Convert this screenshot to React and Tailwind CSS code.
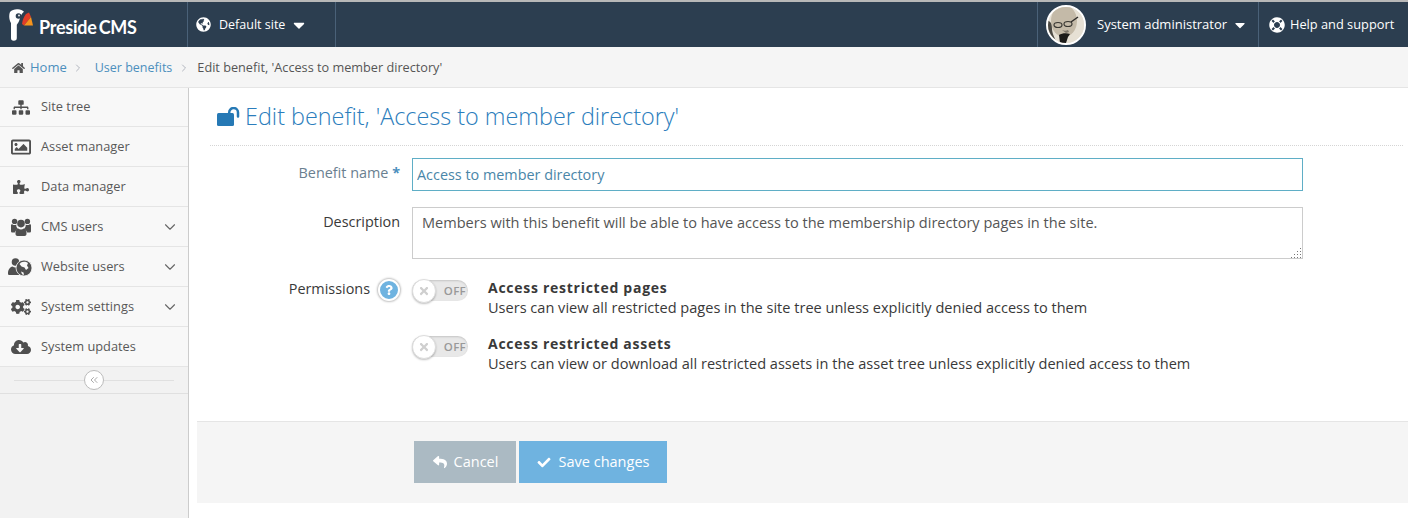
import React from "react";
import {
  FaSitemap,
  FaRegImage,
  FaPuzzlePiece,
  FaCogs,
  FaCloudDownloadAlt,
  FaGlobeAmericas,
  FaHome,
  FaLifeRing,
  FaReply,
  FaCheck,
  FaTimes,
  FaQuestion,
  FaCaretDown,
} from "react-icons/fa";
import { ChevronDown, ChevronRight, ChevronsLeft } from "lucide-react";

const UsersIcon = ({ className }) => (
  <svg viewBox="0 0 20 18" className={className} fill="currentColor">
    <circle cx="3.600" cy="3.400" r="2.700" />
    <circle cx="16.400" cy="3.400" r="2.700" />
    <circle cx="10" cy="5.600" r="3.800" />
    <path d="M0 7.500c0-1 .8-1.500 1.600-1 1.200.8 2.500.8 3.700.1-.2 2 .4 3.400 1.700 4.500-1.500.7-2.600 1.900-3.200 3.400H1.500C.6 14.500 0 14 0 13z" />
    <path d="M20 7.500c0-1-.8-1.500-1.600-1-1.200.8-2.500.8-3.700.1.200 2-.4 3.400-1.700 4.500 1.500.7 2.600 1.900 3.200 3.400h2.300c.9 0 1.500-.5 1.500-1.500z" />
    <path d="M4.500 14.500c0-2 1-3.500 2.700-4 1.700 1.200 3.900 1.200 5.600 0 1.700.5 2.700 2 2.700 4v1.500c0 1.200-.8 2-2 2h-7c-1.200 0-2-.8-2-2z" />
  </svg>
);

const WebsiteUsers = ({ className }) => (
  <svg viewBox="0 0 24 18" className={className} fill="currentColor">
    <circle cx="7.500" cy="4" r="3.800" />
    <path d="M0 15.500c0-4 2-6.500 4.500-7 1.800 1.300 4.200 1.300 6 0 1 .3 2 .8 2.500 1.500L11 17H1.500C.6 17 0 16.500 0 15.500z" />
    <circle cx="16" cy="10" r="8" stroke="#f8f8f8" strokeWidth="0.800" />
    <path d="M13 4.500c2-1 5-1 7 .5l-1 2.500 1.500 2.500-2.500 2-1.500-2.500-3-1-2-2.500z" fill="#f8f8f8" />
    <path d="M13 13.500l2.500 1 .5 2.500-2-.8z" fill="#f8f8f8" />
  </svg>
);

const UnlockIcon = ({ className }) => (
  <svg viewBox="0 0 23 19" className={className}>
    <rect x="0" y="6" width="17" height="13" rx="1.500" fill="currentColor" />
    <path d="M12.200 7V5.400a4.400 4.400 0 0 1 8.800 0V9.500" fill="none" stroke="currentColor" strokeWidth="2.500" strokeLinecap="round" />
  </svg>
);

const Logo = () => (
  <svg viewBox="0 0 24 32" className="h-[32px] w-[24px] shrink-0">
    <path
      d="M1 3C3 .8 6 0 9 .3c2.500.2 4.500 1 6 2.500-2 1.500-3.500 4-4.200 7-.6 2.500-1.800 4.500-3 6V29c0 1.800-1 2.800-3 2.800S2 30.800 2 29V14C.3 11.500 -.5 6.500 1 3z"
      fill="#ffffff"
    />
    <circle cx="9.500" cy="7" r="2.800" fill="#2c3e50" />
    <circle cx="10" cy="6.500" r="0.900" fill="#ffffff" />
    <path d="M17 5l3-1.500L22 8l-7 8.500-2-1.500c.5-4 2-7.500 4-10z" fill="#e23d28" />
    <path d="M22 8l2 8.500-9 0z" fill="#f7941d" />
  </svg>
);

const Avatar = () => (
  <div className="h-[40px] w-[40px] rounded-full border-2 border-white overflow-hidden bg-[#e6e0d4] shrink-0">
    <svg viewBox="0 0 36 36" className="h-full w-full">
      <rect width="36" height="36" fill="#e6e0d4" />
      <ellipse cx="16" cy="14" rx="13" ry="16" fill="#c4baa8" />
      <path d="M0 14c3 0 4 4 4 8s3 10 5 14H0z" fill="#4a4842" />
      <ellipse cx="10" cy="18" rx="4" ry="2.500" fill="none" stroke="#3a3833" strokeWidth="1.200" />
      <ellipse cx="20" cy="17" rx="4" ry="2.500" fill="none" stroke="#3a3833" strokeWidth="1.200" />
      <path d="M23 15l7-5" stroke="#2f2d2a" strokeWidth="1.500" />
      <path d="M14 23c2 1 4 1 6 0l1 2-3 1z" fill="#7d766a" />
      <path d="M11 28c3-2 8-2 11-1l-2 3-2 6h-6z" fill="#1c1b19" />
    </svg>
  </div>
);

const menu = [
  { icon: <FaSitemap className="h-[15px] w-[18px]" />, label: "Site tree" },
  { icon: <FaRegImage className="h-[20px] w-[20px]" />, label: "Asset manager" },
  { icon: <FaPuzzlePiece className="h-[16px] w-[16px]" />, label: "Data manager" },
  { icon: <UsersIcon className="h-[18px] w-[20px]" />, label: "CMS users", more: true },
  { icon: <WebsiteUsers className="h-[18px] w-[24px] -ml-[3px]" />, label: "Website users", more: true },
  { icon: <FaCogs className="h-[16px] w-[20px]" />, label: "System settings", more: true },
  { icon: <FaCloudDownloadAlt className="h-[16px] w-[20px]" />, label: "System updates" },
];

const Sidebar = () => (
  <div className="w-[189px] shrink-0 bg-[#f2f2f2] border-r border-[#cccccc]">
    {menu.map((item) => (
      <div
        key={item.label}
        className="h-[40px] first:h-[39px] flex items-center bg-[#f8f8f8] border-b border-[#e5e5e5] text-[12.800px] text-[#585858]"
      >
        <span className="w-[41px] shrink-0 flex justify-center pl-[1px] text-[#4f4f4f]">{item.icon}</span>
        <span className="flex-1">{item.label}</span>
        {item.more && <ChevronDown strokeWidth={1.5} className="h-[18px] w-[18px] mr-[9px] text-[#666666]" />}
      </div>
    ))}
    <div className="h-[27px] flex items-center px-[14px] border-b border-[#e0e0e0]">
      <div className="flex-1 h-px bg-[#e0e0e0]" />
      <div className="h-[20px] w-[20px] rounded-full border border-[#bbbbbb] bg-white flex items-center justify-center text-[#aaaaaa]">
        <ChevronsLeft className="h-[12px] w-[12px]" />
      </div>
      <div className="flex-1 h-px bg-[#e0e0e0]" />
    </div>
  </div>
);

const Toggle = () => (
  <div className="relative h-[21px] w-[56px] rounded-full bg-[#e8e8e8] shadow-[inset_0_1px_2px_rgba(0,0,0,0.15)] flex items-center justify-end pr-[2px] shrink-0">
    <span className="text-[11.500px] font-semibold tracking-[0.3px] text-[#999999]">OFF</span>
    <div className="absolute left-0 -top-[1px] h-[24px] w-[24px] rounded-full bg-white border border-[#dddddd] shadow-[0_1px_2px_rgba(0,0,0,0.25)] flex items-center justify-center">
      <FaTimes className="h-[12px] w-[12px] text-[#cfcfcf]" />
    </div>
  </div>
);

const Permission = ({ title, text }) => (
  <div className="flex">
    <div className="w-[76px] shrink-0 pt-[4px]">
      <Toggle />
    </div>
    <div className="pt-[2px]">
      <div className="text-[14px] leading-[19px] font-bold text-[#393939] tracking-[0.73px]">{title}</div>
      <div className="text-[14.550px] leading-[20px] text-[#393939]">{text}</div>
    </div>
  </div>
);

export default function App() {
  return (
    <div className="min-h-[518px] bg-white overflow-hidden font-['Open_Sans',sans-serif]">
      <div className="h-[2px] bg-[#b8b8b8]" />
      <div className="h-[45px] bg-[#2c3e50] flex items-stretch text-white text-[13px]">
        <div className="w-[188px] flex items-center pl-[9px] gap-[6px] border-r border-[#4a6178]">
          <Logo />
          <span className="font-['Lato',sans-serif] font-bold text-[18px] tracking-[-0.25px] mt-[5px]">
            Preside<span className="ml-[2px]">CMS</span>
          </span>
        </div>
        <div className="w-[148px] flex items-center pl-[8px] border-r border-[#4a6178]">
          <FaGlobeAmericas className="h-[15px] w-[15px]" />
          <span className="ml-[8px] mt-[1px] text-[12.500px]">Default site</span>
          <FaCaretDown className="h-[18px] w-[18px] ml-[5px]" />
        </div>
        <div className="flex-1" />
        <div className="w-[221px] flex items-center pl-[8px] border-l border-[#4a6178]">
          <Avatar />
          <span className="ml-[11px]">System administrator</span>
          <FaCaretDown className="h-[16px] w-[16px] ml-[5px]" />
        </div>
        <div className="w-[150px] flex items-center pl-[10px] border-l border-[#4a6178]">
          <FaLifeRing className="h-[16px] w-[16px]" />
          <span className="ml-[5px] text-[12.800px]">Help and support</span>
        </div>
      </div>
      <div className="h-[41px] pt-[1px] bg-[#f5f5f5] border-b border-[#e5e5e5] flex items-center pl-[12px] text-[13px] text-[#555555]">
        <FaHome className="h-[12px] w-[13px] text-[#555555]" />
        <span className="ml-[5px] text-[#4c8fbd]">Home</span>
        <ChevronRight className="h-[12px] w-[12px] ml-[5px] mr-[11px] text-[#b2b6bf]" />
        <span className="mt-[1px] text-[12.500px] text-[#4c8fbd]">User benefits</span>
        <ChevronRight className="h-[12px] w-[12px] mx-[6px] text-[#b2b6bf]" />
        <span className="ml-[1px] text-[12.700px]">Edit benefit, 'Access to member directory'</span>
      </div>
      <div className="flex min-h-[430px]">
        <Sidebar />
        <div className="flex-1 flex flex-col pl-[8px] pb-[15px]">
          <div className="ml-[13px] mr-[5px] h-[58px] border-b border-dotted border-[#d5d5d5] flex items-center pl-[7px] text-[#2679b5]">
            <UnlockIcon className="h-[19px] w-[23px] -mt-[1px] shrink-0" />
            <h1 className="ml-[5px] text-[23.400px] font-light text-[#2b7dbc]">
              Edit benefit, 'Access to member directory'
            </h1>
          </div>
          <div className="flex-1 pt-[12px]">
            <div className="flex items-start">
              <label className="w-[203px] text-right text-[14.400px] leading-[20px] pt-[5px] text-[#6a8090]">
                Benefit name <span className="font-bold text-[#4c8fbd]">*</span>
              </label>
              <input
                readOnly
                value="Access to member directory"
                className="ml-[12px] w-[891px] h-[33px] border border-[#5faec6] px-[4px] text-[14.400px] text-[#4a86a8] outline-none"
              />
            </div>
            <div className="flex items-start mt-[16px]">
              <label className="w-[203px] text-right text-[14.400px] leading-[20px] pt-[5px] text-[#393939]">
                Description
              </label>
              <div className="relative ml-[12px] w-[891px] h-[52px]">
                <textarea
                  readOnly
                  value="Members with this benefit will be able to have access to the membership directory pages in the site."
                  className="block w-full h-full resize-none border border-[#cccccc] px-[9px] py-[4px] text-[14.550px] leading-[20px] text-[#555555] outline-none"
                />
                <svg viewBox="0 0 10 10" className="absolute right-[2px] bottom-[1px] h-[10px] w-[10px]" fill="#777777">
                  <rect x="9" y="0" width="1" height="1" />
                  <rect x="6" y="3" width="1" height="1" />
                  <rect x="9" y="3" width="1" height="1" />
                  <rect x="3" y="6" width="1" height="1" />
                  <rect x="6" y="6" width="1" height="1" />
                  <rect x="9" y="6" width="1" height="1" />
                  <rect x="0" y="9" width="1" height="1" />
                  <rect x="3" y="9" width="1" height="1" />
                  <rect x="6" y="9" width="1" height="1" />
                  <rect x="9" y="9" width="1" height="1" />
                </svg>
              </div>
            </div>
            <div className="flex items-start mt-[17px]">
              <label className="w-[173px] text-right text-[14.400px] leading-[20px] pt-[3px] text-[#393939]">
                Permissions
              </label>
              <div className="w-[42px] shrink-0 pl-[8px] pt-[3px]">
                <div className="h-[22px] w-[22px] rounded-full bg-[#6fb3e0] border-2 border-white shadow-[0_0_2px_1px_rgba(0,0,0,0.25)] flex items-center justify-center">
                  <FaQuestion className="h-[10px] w-[10px] text-white" />
                </div>
              </div>
              <div className="flex flex-col gap-[15px]">
                <Permission
                  title="Access restricted pages"
                  text="Users can view all restricted pages in the site tree unless explicitly denied access to them"
                />
                <Permission
                  title="Access restricted assets"
                  text="Users can view or download all restricted assets in the asset tree unless explicitly denied access to them"
                />
              </div>
            </div>
          </div>
          <div className="h-[82px] bg-[#f5f5f5] border-t border-[#e5e5e5] flex items-start pt-[19px] pl-[217px] gap-[3px] text-[14.500px] text-white">
            <button className="h-[42px] w-[102px] bg-[#abbac3] flex items-center justify-center gap-[6px]">
              <FaReply className="h-[14px] w-[16px]" />
              Cancel
            </button>
            <button className="h-[42px] w-[148px] bg-[#6fb3e0] flex items-center justify-center gap-[8px]">
              <FaCheck className="h-[13px] w-[14px]" />
              Save changes
            </button>
          </div>
        </div>
      </div>
    </div>
  );
}
